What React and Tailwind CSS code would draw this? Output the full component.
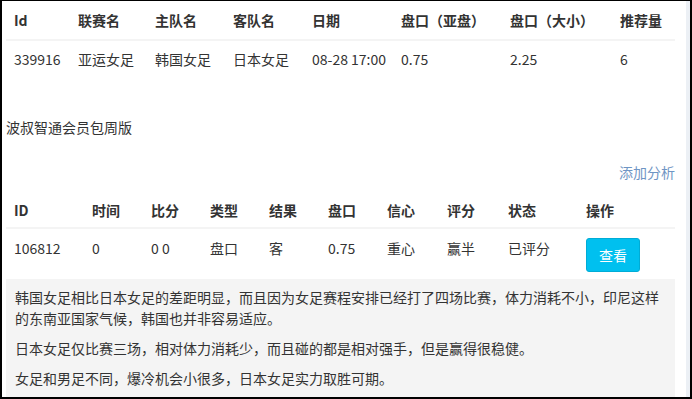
import React from "react";

const font = { fontFamily: '"Noto Sans CJK SC", "Noto Sans", sans-serif' };

const t1cols = [
  ["Id", "339916", "w-[64px]"],
  ["联赛名", "亚运女足", "w-[77px]"],
  ["主队名", "韩国女足", "w-[78px]"],
  ["客队名", "日本女足", "w-[79px]"],
  ["日期", "08-28 17:00", "w-[89px]"],
  ["盘口（亚盘）", "0.75", "w-[109px]"],
  ["盘口（大小）", "2.25", "w-[110px]"],
  ["推荐量", "6", "flex-1"],
];

const t2cols = [
  ["ID", "106812", "w-[78px]"],
  ["时间", "0", "w-[59px]"],
  ["比分", "0 0", "w-[59px]"],
  ["类型", "盘口", "w-[59px]"],
  ["结果", "客", "w-[59px]"],
  ["盘口", "0.75", "w-[59px]"],
  ["信心", "重心", "w-[60px]"],
  ["评分", "赢半", "w-[61px]"],
  ["状态", "已评分", "w-[78px]"],
];

export default function App() {
  return (
    <div
      className="w-[692px] h-[399px] overflow-hidden border-t border-l-2 border-r-2 border-b-2 border-black bg-[#ecf0f5] flex text-[14px] leading-[20px] text-[#333]"
      style={font}
    >
      <div className="w-[684px] h-full bg-white pl-[4px] pr-[11px] flex flex-col">
        {/* Table 1 */}
        <div className="shrink-0 flex h-[40px] items-center border-b-2 border-[#f4f4f4] font-bold">
          {t1cols.map(([h, , w]) => (
            <div key={h} className={`${w} pl-[8px] whitespace-nowrap`}>{h}</div>
          ))}
        </div>
        <div className="shrink-0 flex h-[36px] items-center">
          {t1cols.map(([h, v, w]) => (
            <div key={h} className={`${w} pl-[8px] whitespace-nowrap`}>{v}</div>
          ))}
        </div>

        <div className="shrink-0 mt-[40px] h-[20px]">波叔智通会员包周版</div>

        <div className="shrink-0 mt-[25px] h-[20px] text-right text-[#6f95c4]">添加分析</div>

        {/* Table 2 */}
        <div className="shrink-0 mt-[11px] flex h-[36px] items-center border-b-2 border-[#f4f4f4] font-bold">
          {t2cols.map(([h, , w]) => (
            <div key={h} className={`${w} pl-[8px] whitespace-nowrap`}>{h}</div>
          ))}
          <div className="flex-1 pl-[8px]">操作</div>
        </div>
        <div className="shrink-0 flex h-[50px] items-start pt-[9px]">
          {t2cols.map(([h, v, w]) => (
            <div key={h} className={`${w} pl-[8px] whitespace-nowrap`}>{v}</div>
          ))}
          <div className="flex-1 pl-[8px]">
            <button className="h-[34px] w-[54px] rounded-[3px] border border-[#00acd6] bg-[#00c0ef] text-white text-[14px] leading-[20px]">
              查看
            </button>
          </div>
        </div>

        <div className="shrink-0 flex-1 bg-[#f4f4f4] px-[9px] pt-[8px] leading-[21px]">
          <p className="mb-[9px]">
            <span className="block whitespace-nowrap">韩国女足相比日本女足的差距明显，而且因为女足赛程安排已经打了四场比赛，体力消耗不小，印尼这样</span>
            <span className="block">的东南亚国家气候，韩国也并非容易适应。</span>
          </p>
          <p className="mb-[9px]">日本女足仅比赛三场，相对体力消耗少，而且碰的都是相对强手，但是赢得很稳健。</p>
          <p>女足和男足不同，爆冷机会小很多，日本女足实力取胜可期。</p>
        </div>
      </div>
    </div>
  );
}
